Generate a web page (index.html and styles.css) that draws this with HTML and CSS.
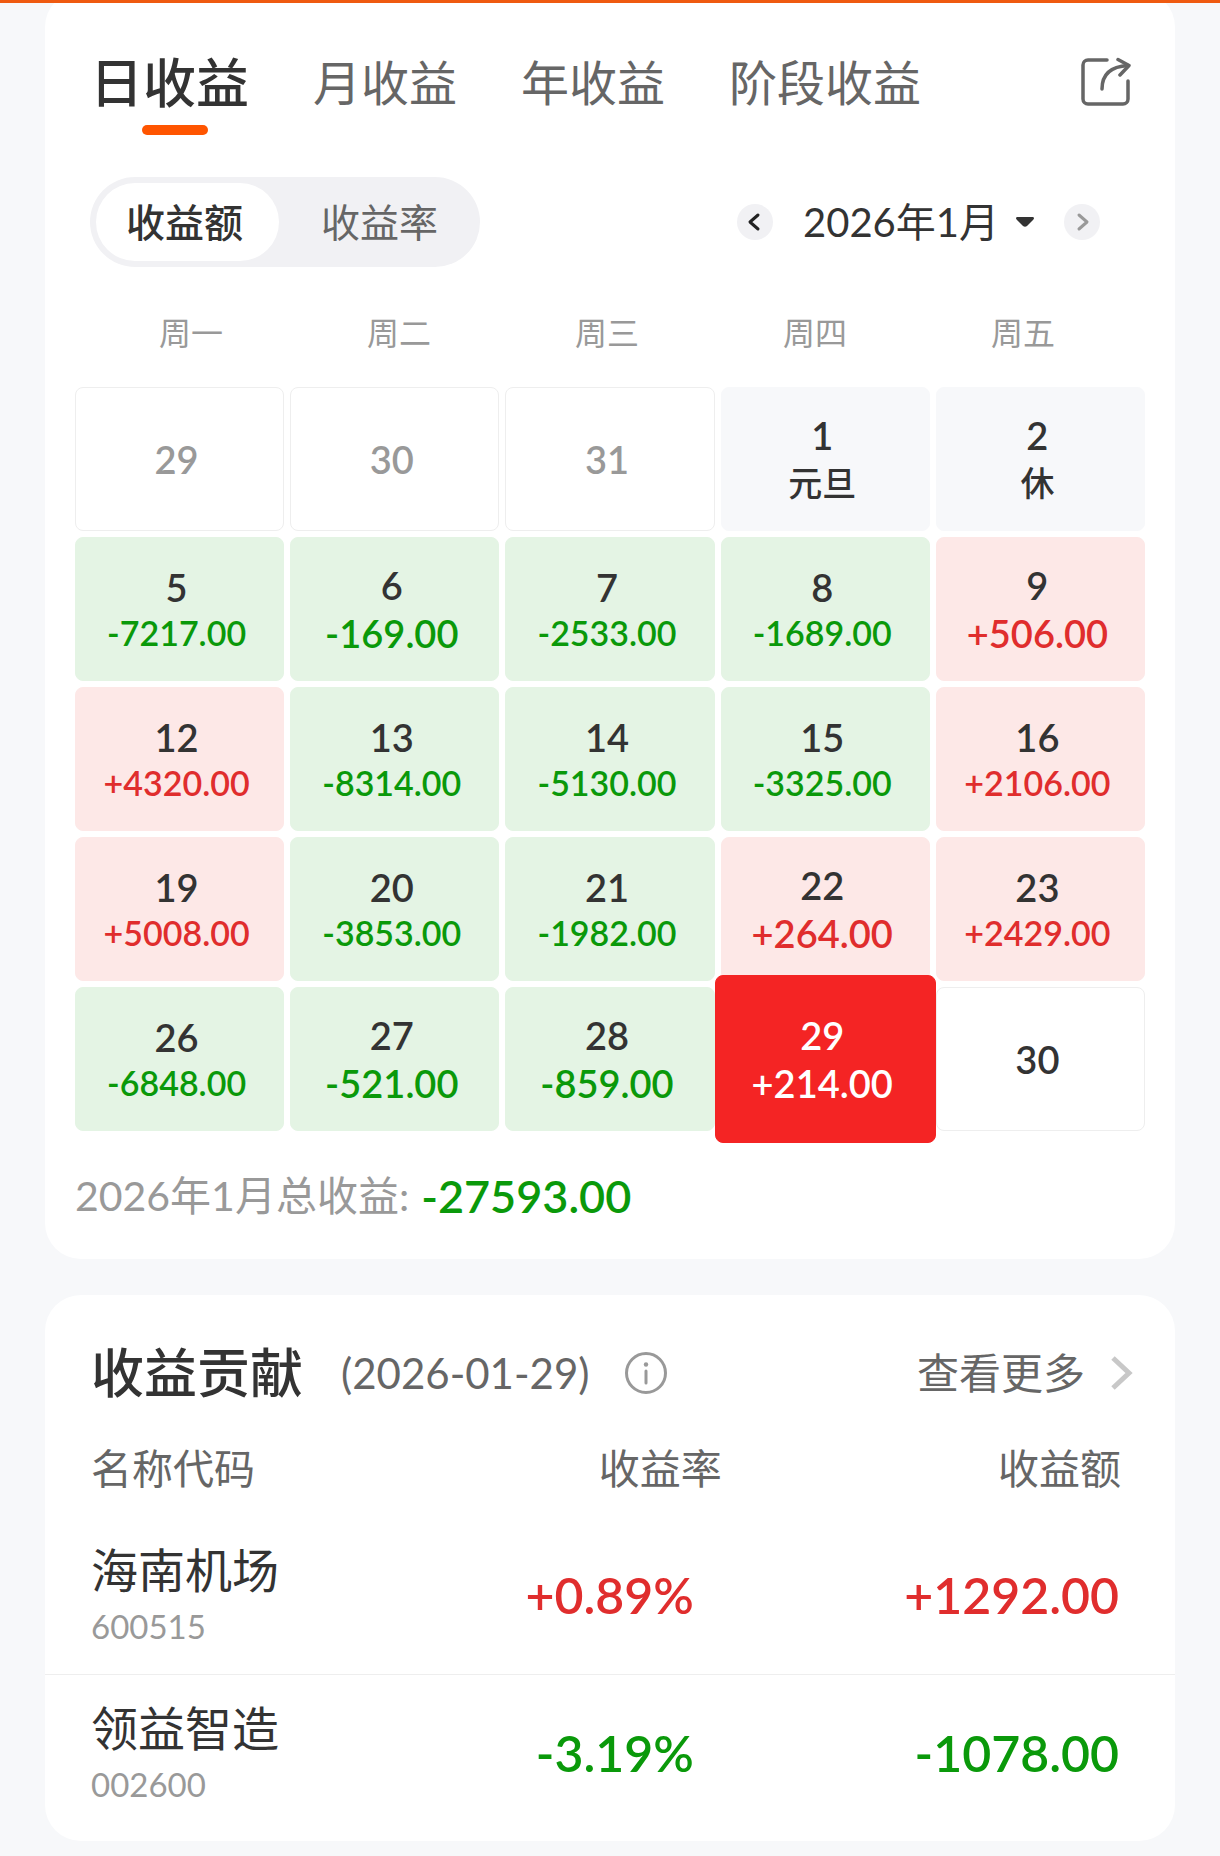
FILE: index.html
```html
<!DOCTYPE html>
<html lang="zh-CN">
<head>
  <meta charset="UTF-8">
  <meta name="viewport" content="width=device-width, initial-scale=1">
  <title>收益日历</title>
  <link rel="stylesheet" href="styles.css">
</head>
<body>
  <div class="top-bar"></div>

  <!-- Calendar card -->
  <section class="card calendar-card">
    <div class="tabs">
      <button class="tab active">日收益</button>
      <button class="tab">月收益</button>
      <button class="tab">年收益</button>
      <button class="tab">阶段收益</button>
      <button class="share" aria-label="分享">
        <svg width="50" height="50" viewBox="0 0 50 50" fill="none" stroke="#666" stroke-width="3.500" stroke-linecap="round" stroke-linejoin="round">
          <path d="M26 3H7a5 5 0 0 0-5 5v34a5 5 0 0 0 5 5h35a5 5 0 0 0 5-5V24"/>
          <path d="M21 32C21 18 29 9.500 47 8.500"/>
          <path d="M37 2.500L48 8.500L39 18"/>
        </svg>
      </button>
    </div>

    <div class="toolbar">
      <div class="switch">
        <button class="switch-item active">收益额</button>
        <button class="switch-item">收益率</button>
      </div>
      <div class="month-nav">
        <button class="round" aria-label="上个月">
          <svg width="36" height="36" viewBox="0 0 36 36" fill="none" stroke="#222" stroke-width="3" stroke-linecap="round" stroke-linejoin="round"><path d="M21 11L13 18L21 25"/></svg>
        </button>
        <label class="month">
          <select aria-label="月份">
            <option>2026年1月</option>
          </select>
          <svg width="18" height="10" viewBox="0 0 18 10" fill="#333"><path d="M1 0H17Q19 1 17 3L11 9Q9 10.500 7 9L1 3Q-1 1 1 0Z"/></svg>
        </label>
        <button class="round" aria-label="下个月">
          <svg width="36" height="36" viewBox="0 0 36 36" fill="none" stroke="#999" stroke-width="3" stroke-linecap="round" stroke-linejoin="round"><path d="M15 11L23 18L15 25"/></svg>
        </button>
      </div>
    </div>

    <div class="weekdays">
      <span>周一</span>
      <span>周二</span>
      <span>周三</span>
      <span>周四</span>
      <span>周五</span>
    </div>

    <div class="days">
      <button class="day other">29</button>
      <button class="day other">30</button>
      <button class="day other">31</button>
      <button class="day holiday">1<span class="note">元旦</span></button>
      <button class="day holiday">2<span class="note">休</span></button>

      <button class="day loss">5<span class="amount long">-7217.00</span></button>
      <button class="day loss">6<span class="amount">-169.00</span></button>
      <button class="day loss">7<span class="amount long">-2533.00</span></button>
      <button class="day loss">8<span class="amount long">-1689.00</span></button>
      <button class="day gain">9<span class="amount">+506.00</span></button>

      <button class="day gain">12<span class="amount long">+4320.00</span></button>
      <button class="day loss">13<span class="amount long">-8314.00</span></button>
      <button class="day loss">14<span class="amount long">-5130.00</span></button>
      <button class="day loss">15<span class="amount long">-3325.00</span></button>
      <button class="day gain">16<span class="amount long">+2106.00</span></button>

      <button class="day gain">19<span class="amount long">+5008.00</span></button>
      <button class="day loss">20<span class="amount long">-3853.00</span></button>
      <button class="day loss">21<span class="amount long">-1982.00</span></button>
      <button class="day gain">22<span class="amount">+264.00</span></button>
      <button class="day gain">23<span class="amount long">+2429.00</span></button>

      <button class="day loss">26<span class="amount long">-6848.00</span></button>
      <button class="day loss">27<span class="amount">-521.00</span></button>
      <button class="day loss">28<span class="amount">-859.00</span></button>
      <button class="day gain selected">29<span class="amount">+214.00</span></button>
      <button class="day">30</button>
    </div>

    <p class="total">2026年1月总收益: <strong>-27593.00</strong></p>
  </section>

  <!-- Contribution card -->
  <section class="card contribution-card">
    <div class="card-head">
      <h2>收益贡献</h2>
      <span class="date">(2026-01-29)</span>
      <button class="info" aria-label="说明">
        <svg width="42" height="42" viewBox="0 0 42 42" fill="none" stroke="#999" stroke-width="3" stroke-linecap="round">
          <circle cx="21" cy="21" r="19.500"/>
          <path d="M21 19V31"/>
          <circle cx="21" cy="12.500" r="2.200" fill="#999" stroke="none"/>
        </svg>
      </button>
      <a class="more" href="#">查看更多
        <svg width="22" height="36" viewBox="0 0 22 36" fill="none" stroke="#c8c8c8" stroke-width="5"><path d="M2 3L18 18L2 33"/></svg>
      </a>
    </div>

    <table class="stocks">
      <thead>
        <tr>
          <th>名称代码</th>
          <th>收益率</th>
          <th>收益额</th>
        </tr>
      </thead>
      <tbody>
        <tr>
          <td><span class="name">海南机场</span><span class="code">600515</span></td>
          <td class="up">+0.89%</td>
          <td class="up">+1292.00</td>
        </tr>
        <tr>
          <td><span class="name">领益智造</span><span class="code">002600</span></td>
          <td class="down">-3.19%</td>
          <td class="down">-1078.00</td>
        </tr>
      </tbody>
    </table>
  </section>
</body>
</html>
```

FILE: styles.css
```css
* {
  box-sizing: border-box;
}
body {
  margin: 0;
  background-color: #f7f8fa;
  color: #333;
  font-family: Lato, "Noto Sans CJK SC", sans-serif;
  line-height: 1.2;
}
button, select {
  margin: 0;
  padding: 0;
  border: 0;
  background: none;
  color: inherit;
  font: inherit;
  cursor: pointer;
}
svg {
  display: block;
}
.top-bar {
  position: relative;
  z-index: 2;
  height: 3px;
  background-color: #ef5a10;
}
.card {
  margin: 0 45px 36px;
  border-radius: 36px;
  background-color: #fff;
}

/* calendar */
.calendar-card {
  margin-top: -12px;
  padding: 60px 30px 35px;
}
.tabs {
  display: flex;
  align-items: flex-start;
  gap: 64px;
  height: 84px;
  padding: 0 14px 0 15px;
}
.tab {
  color: #666;
  font-size: 48px;
  line-height: 64px;
  white-space: nowrap;
}
.tab.active {
  color: #333;
  font-size: 53px;
  font-weight: 500;
}
.tab.active::after {
  content: "";
  display: block;
  width: 66px;
  height: 10px;
  margin: 10px 0 0 52px;
  border-radius: 5px;
  background-color: #ff5500;
}
.share {
  margin: 6px 0 0 auto;
}
.toolbar {
  display: flex;
  align-items: center;
  justify-content: space-between;
  margin-top: 42px;
  padding: 0 45px 0 15px;
}
.switch {
  display: flex;
  height: 90px;
  padding: 6px 0 6px 6px;
  border-radius: 45px;
  background-color: #f1f1f4;
}
.switch-item {
  width: 201px;
  border-radius: 39px;
  color: #666;
  font-size: 39px;
}
.switch-item.active {
  width: 183px;
  padding-right: 6px;
  background-color: #fff;
  color: #333;
  font-weight: 500;
}
.month-nav {
  display: flex;
  align-items: center;
  gap: 30px;
}
.round {
  width: 36px;
  height: 36px;
  border-radius: 50%;
  background-color: #f1f1f4;
}
.month {
  display: flex;
  align-items: center;
  gap: 17px;
}
.month select {
  appearance: none;
  font-size: 40px;
  line-height: 56px;
}
.weekdays {
  display: grid;
  grid-template-columns: repeat(5, 1fr);
  margin-top: 42px;
  padding: 0 18px 0 12px;
  color: #999;
  font-size: 32px;
  line-height: 48px;
  text-align: center;
}
.days {
  display: grid;
  grid-template-columns: repeat(5, 1fr);
  grid-auto-rows: 144px;
  gap: 6px;
  margin-top: 30px;
}
.day {
  display: flex;
  flex-direction: column;
  align-items: center;
  justify-content: center;
  padding-right: 6px;
  border: 1px solid #eee;
  border-radius: 8px;
  font-size: 38px;
  font-weight: 600;
  line-height: 48px;
}
.other {
  color: #999;
}
.holiday {
  border-color: #f7f8fa;
  background-color: #f7f8fa;
}
.note {
  font-size: 34px;
  font-weight: 500;
}
.loss {
  border-color: #e4f4e4;
  background-color: #e4f4e4;
}
.gain {
  border-color: #fde8e7;
  background-color: #fde8e7;
}
.amount.long {
  font-size: 34px;
  line-height: 44px;
}
.loss .amount, .total strong, .down {
  color: #0a990a;
}
.gain .amount, .up {
  color: #e02d2d;
}
.day.selected {
  z-index: 1;
  margin: -12px -6px;
  border-color: #f42424;
  background-color: #f42424;
  color: #fff;
}
.selected .amount {
  color: #fff;
}
.total {
  display: flex;
  align-items: center;
  gap: 12px;
  margin: 37px 0 0;
  color: #999;
  font-size: 41px;
  line-height: 56px;
}
.total strong {
  font-size: 45px;
  font-weight: 600;
}

/* contribution */
.contribution-card {
  margin-bottom: 0;
  padding: 46px 0 9px;
}
.card-head {
  display: flex;
  align-items: center;
  height: 64px;
  padding: 0 42px 0 46px;
}
.card-head h2 {
  margin: 0;
  font-size: 53px;
  font-weight: 500;
}
.date {
  margin: 0 35px 0 38px;
  color: #666;
  font-size: 42px;
}
.more {
  display: flex;
  align-items: center;
  gap: 26px;
  margin-left: auto;
  color: #666;
  font-size: 42px;
  text-decoration: none;
}
.stocks {
  width: 100%;
  margin-top: 17px;
  border-collapse: collapse;
  table-layout: fixed;
}
.stocks th {
  height: 94px;
  padding: 0 54px 0 0;
  color: #666;
  font-size: 41px;
  font-weight: 400;
  text-align: right;
}
.stocks td {
  height: 158px;
  padding: 0 56px 0 0;
  font-size: 50px;
  font-weight: 600;
  text-align: right;
}
.stocks th:first-child, .stocks td:first-child {
  width: 29%;
  padding: 0 0 0 46px;
  font-weight: 400;
  text-align: left;
}
.stocks th:nth-child(2) {
  padding-right: 52px;
}
.stocks td:nth-child(2) {
  padding-right: 80px;
}
.stocks tbody tr + tr {
  border-top: 1px solid #eee;
}
.name {
  display: block;
  font-size: 47px;
  line-height: 52px;
}
.code {
  display: block;
  margin-top: 10px;
  color: #999;
  font-size: 33px;
  line-height: 40px;
}
```
